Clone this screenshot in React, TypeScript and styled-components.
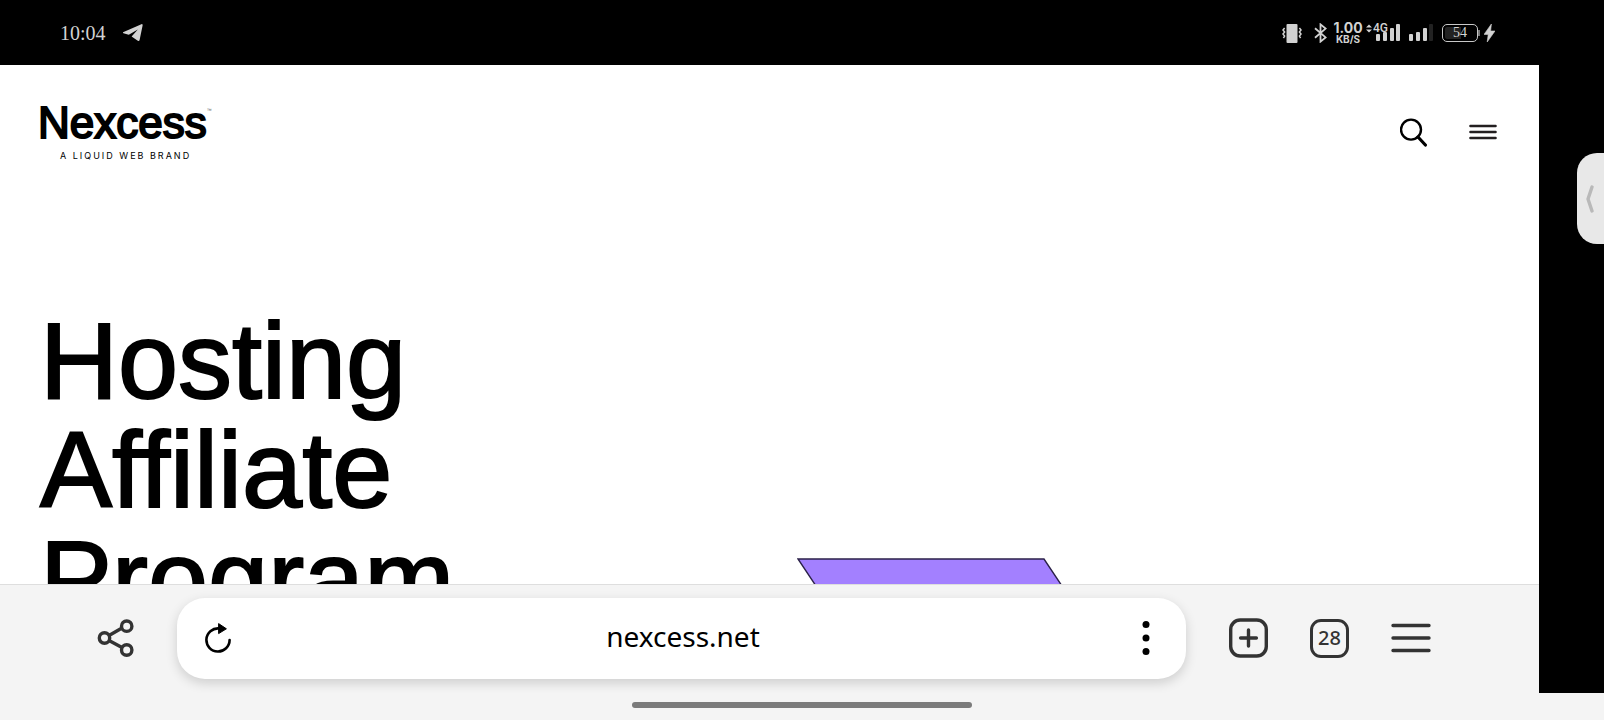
import React from "react";
import styled, { createGlobalStyle } from "styled-components";

const GlobalStyle = createGlobalStyle`
  * { box-sizing: border-box; }
  body { margin: 0; background: #000; font-family: Inter, sans-serif; color: #000; }
  button { border: 0; padding: 0; background: none; color: inherit; font: inherit; cursor: pointer; }
  svg { display: block; }
`;

const Screen = styled.div`
  display: flex;
  flex-direction: column;
  height: 100vh;
  overflow: hidden;
`;

const StatusBar = styled.header`
  display: flex;
  justify-content: space-between;
  align-items: center;
  flex: none;
  height: 65px;
  padding: 0 109px 0 60px;
  background: #000;
  color: #d2d2d2;
`;

const StatusGroup = styled.div<{ $gap: number }>`
  display: flex;
  align-items: center;
  gap: ${(p) => p.$gap}px;
`;

const Clock = styled.time`
  font: 20px/24px "Liberation Serif", serif;
`;

const Speed = styled.div`
  display: flex;
  flex-direction: column;
  align-items: center;
  width: 30px;
  font-weight: 700;
`;

const SpeedValue = styled.span`
  font-size: 14px;
  line-height: 12px;
`;

const SpeedUnit = styled.span`
  font-size: 10px;
  line-height: 10px;
`;

const Signal = styled.div`
  position: relative;
`;

const NetworkType = styled.span`
  position: absolute;
  top: 0;
  left: 7px;
  font: 500 12px/8px Roboto, sans-serif;
`;

const Battery = styled.div`
  display: flex;
  align-items: center;
`;

const BatteryShell = styled.div`
  display: flex;
  align-items: center;
  justify-content: center;
  width: 36px;
  height: 18px;
  border: 1px solid #c8c8c8;
  border-radius: 5px;
  background: linear-gradient(90deg, #222 54%, #000 54%) content-box;
  padding: 2px;
  font: 14px/14px "Liberation Serif", serif;
`;

const BatteryCap = styled.div`
  width: 2px;
  height: 6px;
  background: #777;
`;

const Body = styled.div`
  display: flex;
  flex: 1;
  min-height: 0;
`;

const Browser = styled.div`
  display: flex;
  flex-direction: column;
  flex: 1;
  min-width: 0;
  background: #fff;
`;

const Rail = styled.aside`
  display: flex;
  justify-content: flex-end;
  align-items: flex-start;
  width: 65px;
  padding-top: 88px;
  background: #000;
`;

const Handle = styled.button`
  display: flex;
  align-items: center;
  width: 27px;
  height: 91px;
  && { padding-left: 8px; background: #e8e8e8; }
  border-radius: 20px 0 0 20px;
`;

const Site = styled.main`
  flex: 1;
  min-height: 0;
  overflow: hidden;
`;

const SiteHeader = styled.div`
  display: flex;
  justify-content: space-between;
  align-items: flex-start;
  padding: 36px 42px 0 38px;
`;

const Logo = styled.a`
  display: flex;
  flex-direction: column;
  color: #000;
  text-decoration: none;
`;

const LogoName = styled.span`
  display: flex;
  align-items: flex-start;
  font: 44px/44px "Liberation Sans", Arial, sans-serif;
  -webkit-text-stroke: 2px #000;
`;

const Trademark = styled.span`
  font-size: 5px;
  line-height: 18px;
  color: #555;
  -webkit-text-stroke: 0;
`;

const Tagline = styled.span`
  padding-left: 22px;
  font: 9px/22px Inter, sans-serif;
  letter-spacing: 2px;
`;

const SiteActions = styled.nav`
  display: flex;
  align-items: center;
  gap: 41px;
  padding-top: 16px;
`;

const Hero = styled.section`
  display: grid;
  grid-template-columns: 1fr 1fr;
  gap: 56px;
  padding: 139px 41px 0 40px;
`;

const Title = styled.h1`
  margin: 0;
  font: 108px/109px "Liberation Sans", Arial, sans-serif;
  -webkit-text-stroke: 2px #000;
`;

const Art = styled.div`
  padding-top: 252px;
`;

const Toolbar = styled.div`
  display: flex;
  align-items: center;
  flex: none;
  height: 109px;
  padding: 0 108px 2px 97px;
  border-top: 1px solid #dedede;
  background: #f4f4f4;
  color: #333;
`;

const AddressBar = styled.div`
  display: flex;
  align-items: center;
  flex: 1;
  min-width: 0;
  height: 81px;
  margin: 0 43px;
  padding: 0 36px 0 27px;
  border-radius: 28px;
  background: #fff;
  color: #000;
  box-shadow: 0 4px 12px rgba(0, 0, 0, 0.16);
`;

const Address = styled.input`
  flex: 1;
  min-width: 0;
  height: 44px;
  padding: 0 8px 4px 0;
  border: 0;
  outline: 0;
  background: none;
  color: #000;
  text-align: center;
  font: 28px/40px "Noto Sans", sans-serif;
`;

const ToolbarActions = styled.div`
  display: flex;
  align-items: center;
  gap: 42px;
`;

const TabCount = styled.button`
  && {
    width: 39px;
    height: 39px;
    border: 3px solid #333;
    border-radius: 11px;
    font: 500 20px/32px "Noto Sans", sans-serif;
  }
`;

const GestureArea = styled.footer`
  display: flex;
  justify-content: center;
  flex: none;
  height: 27px;
  padding-top: 9px;
  background: #f4f4f4;
`;

const GesturePill = styled.div`
  width: 340px;
  height: 6px;
  border-radius: 3px;
  background: #7b7b7b;
`;

const TelegramIcon = () => (
  <svg width="20" height="18" viewBox="0 0 20 18" fill="#d2d2d2">
    <path d="M0 8.2 18.4.2Q19.8-.2 19.6 1.4L16.6 16Q16.2 17.6 14.8 16.8L8.6 12.6 14.8 5.4 5.8 10.8.4 9.2Q-.4 8.7 0 8.2Z" />
  </svg>
);

const VibrateIcon = () => (
  <svg width="20" height="20" viewBox="0 0 20 20" fill="none" stroke="#d2d2d2" strokeWidth="1.5">
    <rect x="4.5" y="1" width="11" height="19" rx="1" fill="#d2d2d2" stroke="none" />
    <path d="M2.6 5 1 7l1.6 2L1 11l1.6 2L1.4 15M17.4 5 19 7l-1.6 2L19 11l-1.6 2 1.2 2" />
  </svg>
);

const BluetoothIcon = () => (
  <svg width="13" height="20" viewBox="0 0 13 20" fill="none" stroke="#d2d2d2" strokeWidth="1.8">
    <path d="M1 5.2 11.6 14.4 6.5 18.6V1.4L11.6 5.6 1 14.8" />
  </svg>
);

const bars = [
  { x: 0, y: 10 },
  { x: 7, y: 8 },
  { x: 14, y: 4 },
  { x: 20, y: 0 },
];

const SignalBars = ({ level, arrows }: { level: number; arrows?: boolean }) => {
  const left = arrows ? 10 : 0;
  return (
    <svg width={24 + left} height="17" viewBox={`0 0 ${24 + left} 17`}>
      {arrows && <path d="M0 3.5 3 .5l3 3ZM0 5.5h6l-3 3Z" fill="#d2d2d2" />}
      {bars.map((b, i) => (
        <rect key={b.x} x={b.x + left} y={b.y} width="4" height={17 - b.y} rx="1" fill={i < level ? "#d2d2d2" : "#222"} />
      ))}
    </svg>
  );
};

const BoltIcon = () => (
  <svg width="11" height="18" viewBox="0 0 11 18" fill="#d2d2d2">
    <path d="M7.4 0 0 10.4h4.2L3.2 18 11 7H6.6Z" stroke="#d2d2d2" strokeWidth=".6" />
  </svg>
);

const SearchIcon = () => (
  <svg width="28" height="30" viewBox="0 0 28 30" fill="none" stroke="#000" strokeLinecap="round">
    <circle cx="11" cy="12.6" r="10" strokeWidth="2.4" />
    <path d="m18 20 7.4 8" strokeWidth="3.2" />
  </svg>
);

const SiteMenuIcon = () => (
  <svg width="28" height="16" viewBox="0 0 28 16" stroke="#231f20" strokeWidth="2.4" strokeLinecap="round">
    <path d="M1.4 2h25.2M1.4 8h25.2M1.4 14h25.2" />
  </svg>
);

const HandleIcon = () => (
  <svg width="9" height="28" viewBox="0 0 9 28" fill="none" stroke="#b9b9b9" strokeWidth="3.4" strokeLinecap="round" strokeLinejoin="round">
    <path d="M7 2 3 14l4 12" />
  </svg>
);

const ShareIcon = () => (
  <svg width="37" height="38" viewBox="0 0 37 38" fill="none" stroke="#333" strokeWidth="3.4">
    <circle cx="7.5" cy="19" r="5.2" />
    <circle cx="29.7" cy="7.2" r="5.2" />
    <circle cx="29.7" cy="31" r="5.2" />
    <path d="m12 16.5 13-7.4M12 21.5l13 7" />
  </svg>
);

const ReloadIcon = () => (
  <svg width="28" height="30" viewBox="0 0 28 30" fill="none" stroke="#000" strokeWidth="2.6">
    <path d="M15 5.4A11.6 11.6 0 1 0 25.6 17" strokeLinecap="round" />
    <path d="M14.6.6v10L22.4 5.8Z" fill="#000" strokeWidth="1" strokeLinejoin="round" />
  </svg>
);

const DotsIcon = () => (
  <svg width="8" height="36" viewBox="0 0 8 36">
    <circle cx="4" cy="4.4" r="3.5" />
    <circle cx="4" cy="18" r="3.5" />
    <circle cx="4" cy="31.6" r="3.5" />
  </svg>
);

const NewTabIcon = () => (
  <svg width="39" height="40" viewBox="0 0 39 40" fill="none" stroke="#333" strokeWidth="3.4" strokeLinecap="round">
    <rect x="1.7" y="2" width="35.6" height="36" rx="9.5" />
    <path d="M11.6 20h15.8M19.5 12v16" />
  </svg>
);

const MenuIcon = () => (
  <svg width="40" height="30" viewBox="0 0 40 30" stroke="#333" strokeWidth="3.4" strokeLinecap="round">
    <path d="M2 2.5h36M2 15h36M2 27.5h36" />
  </svg>
);

const Parallelogram = () => (
  <svg width="340" height="140" viewBox="0 0 340 140" fill="#a380ff" stroke="#2b2148" strokeWidth="1.4">
    <path d="M1 1H247L339 139H93Z" />
  </svg>
);

export default function App() {
  return (
    <Screen>
      <GlobalStyle />
      <StatusBar>
        <StatusGroup $gap={17}>
          <Clock>10:04</Clock>
          <TelegramIcon />
        </StatusGroup>
        <StatusGroup $gap={9}>
          <StatusGroup $gap={12}>
            <VibrateIcon />
            <StatusGroup $gap={3}>
              <StatusGroup $gap={6}>
                <BluetoothIcon />
                <Speed>
                  <SpeedValue>1.00</SpeedValue>
                  <SpeedUnit>KB/S</SpeedUnit>
                </Speed>
              </StatusGroup>
              <Signal>
                <SignalBars level={4} arrows />
                <NetworkType>4G</NetworkType>
              </Signal>
            </StatusGroup>
          </StatusGroup>
          <SignalBars level={3} />
          <StatusGroup $gap={4}>
            <Battery>
              <BatteryShell>54</BatteryShell>
              <BatteryCap />
            </Battery>
            <BoltIcon />
          </StatusGroup>
        </StatusGroup>
      </StatusBar>
      <Body>
        <Browser>
          <Site>
            <SiteHeader>
              <Logo href="#">
                <LogoName>
                  Nexcess<Trademark>™</Trademark>
                </LogoName>
                <Tagline>A LIQUID WEB BRAND</Tagline>
              </Logo>
              <SiteActions>
                <button aria-label="Search"><SearchIcon /></button>
                <button aria-label="Site menu"><SiteMenuIcon /></button>
              </SiteActions>
            </SiteHeader>
            <Hero>
              <Title>
                Hosting
                <br />
                Affiliate
                <br />
                Program
              </Title>
              <Art>
                <Parallelogram />
              </Art>
            </Hero>
          </Site>
          <Toolbar>
            <button aria-label="Share"><ShareIcon /></button>
            <AddressBar>
              <button aria-label="Reload"><ReloadIcon /></button>
              <Address aria-label="Address" defaultValue="nexcess.net" />
              <button aria-label="Page options"><DotsIcon /></button>
            </AddressBar>
            <ToolbarActions>
              <button aria-label="New tab"><NewTabIcon /></button>
              <TabCount aria-label="28 open tabs">28</TabCount>
              <button aria-label="Browser menu"><MenuIcon /></button>
            </ToolbarActions>
          </Toolbar>
        </Browser>
        <Rail>
          <Handle aria-label="Open side panel"><HandleIcon /></Handle>
        </Rail>
      </Body>
      <GestureArea>
        <GesturePill />
      </GestureArea>
    </Screen>
  );
}
